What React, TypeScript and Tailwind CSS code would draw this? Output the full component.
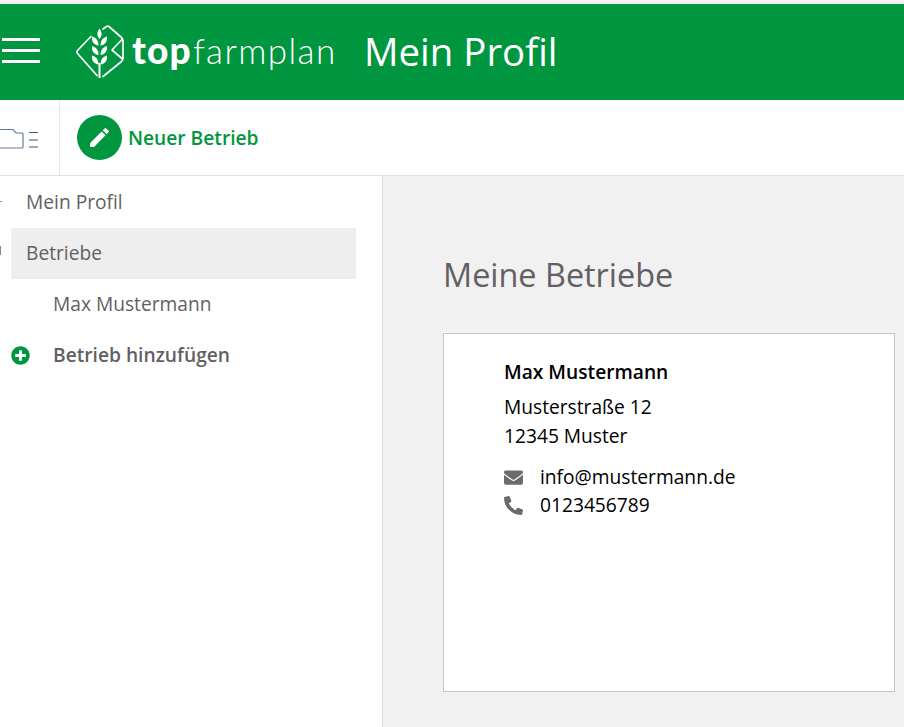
import React from "react";
import { FaEnvelope, FaPhoneAlt, FaPlusCircle } from "react-icons/fa";
import { MdEdit } from "react-icons/md";

function Logo() {
  return (
    <svg width="60" height="60" viewBox="0 0 60 60" fill="none" className="shrink-0">
      <g fill="none" stroke="#fff" strokeWidth="1.7" strokeLinejoin="round" strokeLinecap="round">
        <path d="M15 15.5 L1.5 29.5 Q0.5 31 1.5 32.5 L21 54.5" />
        <path d="M27 8 L30.5 5.5 Q32 4.5 33.5 6 L45.5 16.5 Q47 18 47 20 V37 Q47 39 45.5 40.5 L27 55.5" />
        <path d="M46.5 18 L36 29 L46.5 38" />
      </g>
      <path d="M23.5 57 V42" stroke="#fff" strokeWidth="2" />
      <g fill="#fff" transform="translate(0 4.5)">
        <path d="M23.5 3 C26 6 26.5 10 23.5 13.5 C20.5 10 21 6 23.5 3Z" />
        <path d="M16 11 C20 12 22.5 15 22.5 20 C18 19.5 15.5 16 16 11Z" />
        <path d="M31 11 C27 12 24.5 15 24.5 20 C29 19.5 31.5 16 31 11Z" />
        <path d="M16 20.5 C20 21.5 22.5 24.5 22.5 29.5 C18 29 15.5 25.5 16 20.5Z" />
        <path d="M31 20.5 C27 21.5 24.5 24.5 24.5 29.5 C29 29 31.5 25.5 31 20.5Z" />
        <path d="M16 30 C20 31 22.5 34 22.5 39 C18 38.5 15.5 35 16 30Z" />
        <path d="M31 30 C27 31 24.5 34 24.5 39 C29 38.5 31.5 35 31 30Z" />
      </g>
    </svg>
  );
}

export default function App() {
  return (
    <div className="h-[727px] w-[904px] overflow-hidden bg-[#f1f1f1] font-['Open_Sans',sans-serif] flex flex-col pt-1">
      <header className="h-24 shrink-0 bg-[#009640] flex items-center">
        <div className="ml-[2px] w-[38px] flex flex-col gap-[8px] -mt-[4px]">
          <div className="h-[3px] bg-white" />
          <div className="h-[3px] bg-white" />
          <div className="h-[3px] bg-white" />
        </div>
        <div className="ml-[36px] -mt-[3px]"><Logo /></div>
        <div className="ml-[-4px] -mt-[6px] w-[232px] text-white text-[35px] leading-none flex items-baseline font-['Lato',sans-serif]">
          <span className="font-black text-[37px] tracking-[1.2px]">top</span>
          <span className="font-light ml-[1px] tracking-[1.4px]">farmplan</span>
        </div>
        <h1 className="-mt-[2px] text-white text-[38.4px] leading-none font-normal">Mein Profil</h1>
      </header>
      <div className="h-[76px] shrink-0 bg-white border-b border-[#dfdfdf] flex">
        <div className="w-[60px] border-r border-[#e8e8e8] flex items-center overflow-hidden">
          <svg width="40" height="22" viewBox="0 0 40 22" fill="none" className="shrink-0 mt-[2px]">
            <path d="M-2 1.5 H13 L16 5 H22 Q23 5 23 6 V19 Q23 20 22 20 H-2" stroke="#64789a" strokeWidth="1.2" fill="#fff" />
            <path d="M29 4.5 H38 M29 12 H38 M29 19 H38" stroke="#555" strokeWidth="1.2" />
          </svg>
        </div>
        <div className="ml-[17px] flex items-center">
          <div className="w-[45px] h-[45px] rounded-full bg-[#009640] flex items-center justify-center">
            <MdEdit className="text-white w-[25px] h-[25px]" />
          </div>
          <span className="ml-[6px] text-[#009640] text-[19.2px] font-semibold leading-none">Neuer Betrieb</span>
        </div>
      </div>
      <div className="flex-1 flex min-h-0">
        <aside className="w-[383px] shrink-0 bg-white border-r border-[#dcdcdc] pt-[1px] text-[19.2px] text-[#635f64] relative">
          <div className="absolute left-0 top-[25px] w-[2px] h-[1px] bg-[#999]" />
          <div className="absolute left-0 top-[70px] w-[1px] h-[9px] bg-[#888]" />
          <div className="h-[51px] flex items-center pl-[26px]">Mein Profil</div>
          <div className="h-[51px] ml-[11px] w-[345px] bg-[#eeeeee] flex items-center pl-[15px]">Betriebe</div>
          <div className="h-[51px] flex items-center pl-[53px]">Max Mustermann</div>
          <div className="h-[51px] flex items-center pl-[11px] font-semibold">
            <FaPlusCircle className="text-[#009640] w-[19px] h-[19px]" />
            <span className="ml-[23px]">Betrieb hinzufügen</span>
          </div>
        </aside>
        <main className="flex-1 pl-[60px] pt-[78px] pr-[9px]">
          <h2 className="text-[32.4px] leading-[40px] text-[#635f64] font-normal">Meine Betriebe</h2>
          <div className="mt-[39px] h-[359px] bg-white border border-[#c6c6c6] pl-[60px] pt-[23px] text-black text-[19.2px]">
            <div className="font-semibold leading-[29px]">Max Mustermann</div>
            <div className="mt-[6px] leading-[29px]">Musterstraße 12</div>
            <div className="leading-[29px]">12345 Muster</div>
            <div className="mt-[13px] flex items-center h-[28px]">
              <FaEnvelope className="text-[#6d6a6e] w-[19px] h-[19px]" />
              <span className="ml-[17px]">info@mustermann.de</span>
            </div>
            <div className="flex items-center h-[28px]">
              <FaPhoneAlt className="text-[#6d6a6e] w-[19px] h-[19px]" />
              <span className="ml-[17px]">0123456789</span>
            </div>
          </div>
        </main>
      </div>
    </div>
  );
}
